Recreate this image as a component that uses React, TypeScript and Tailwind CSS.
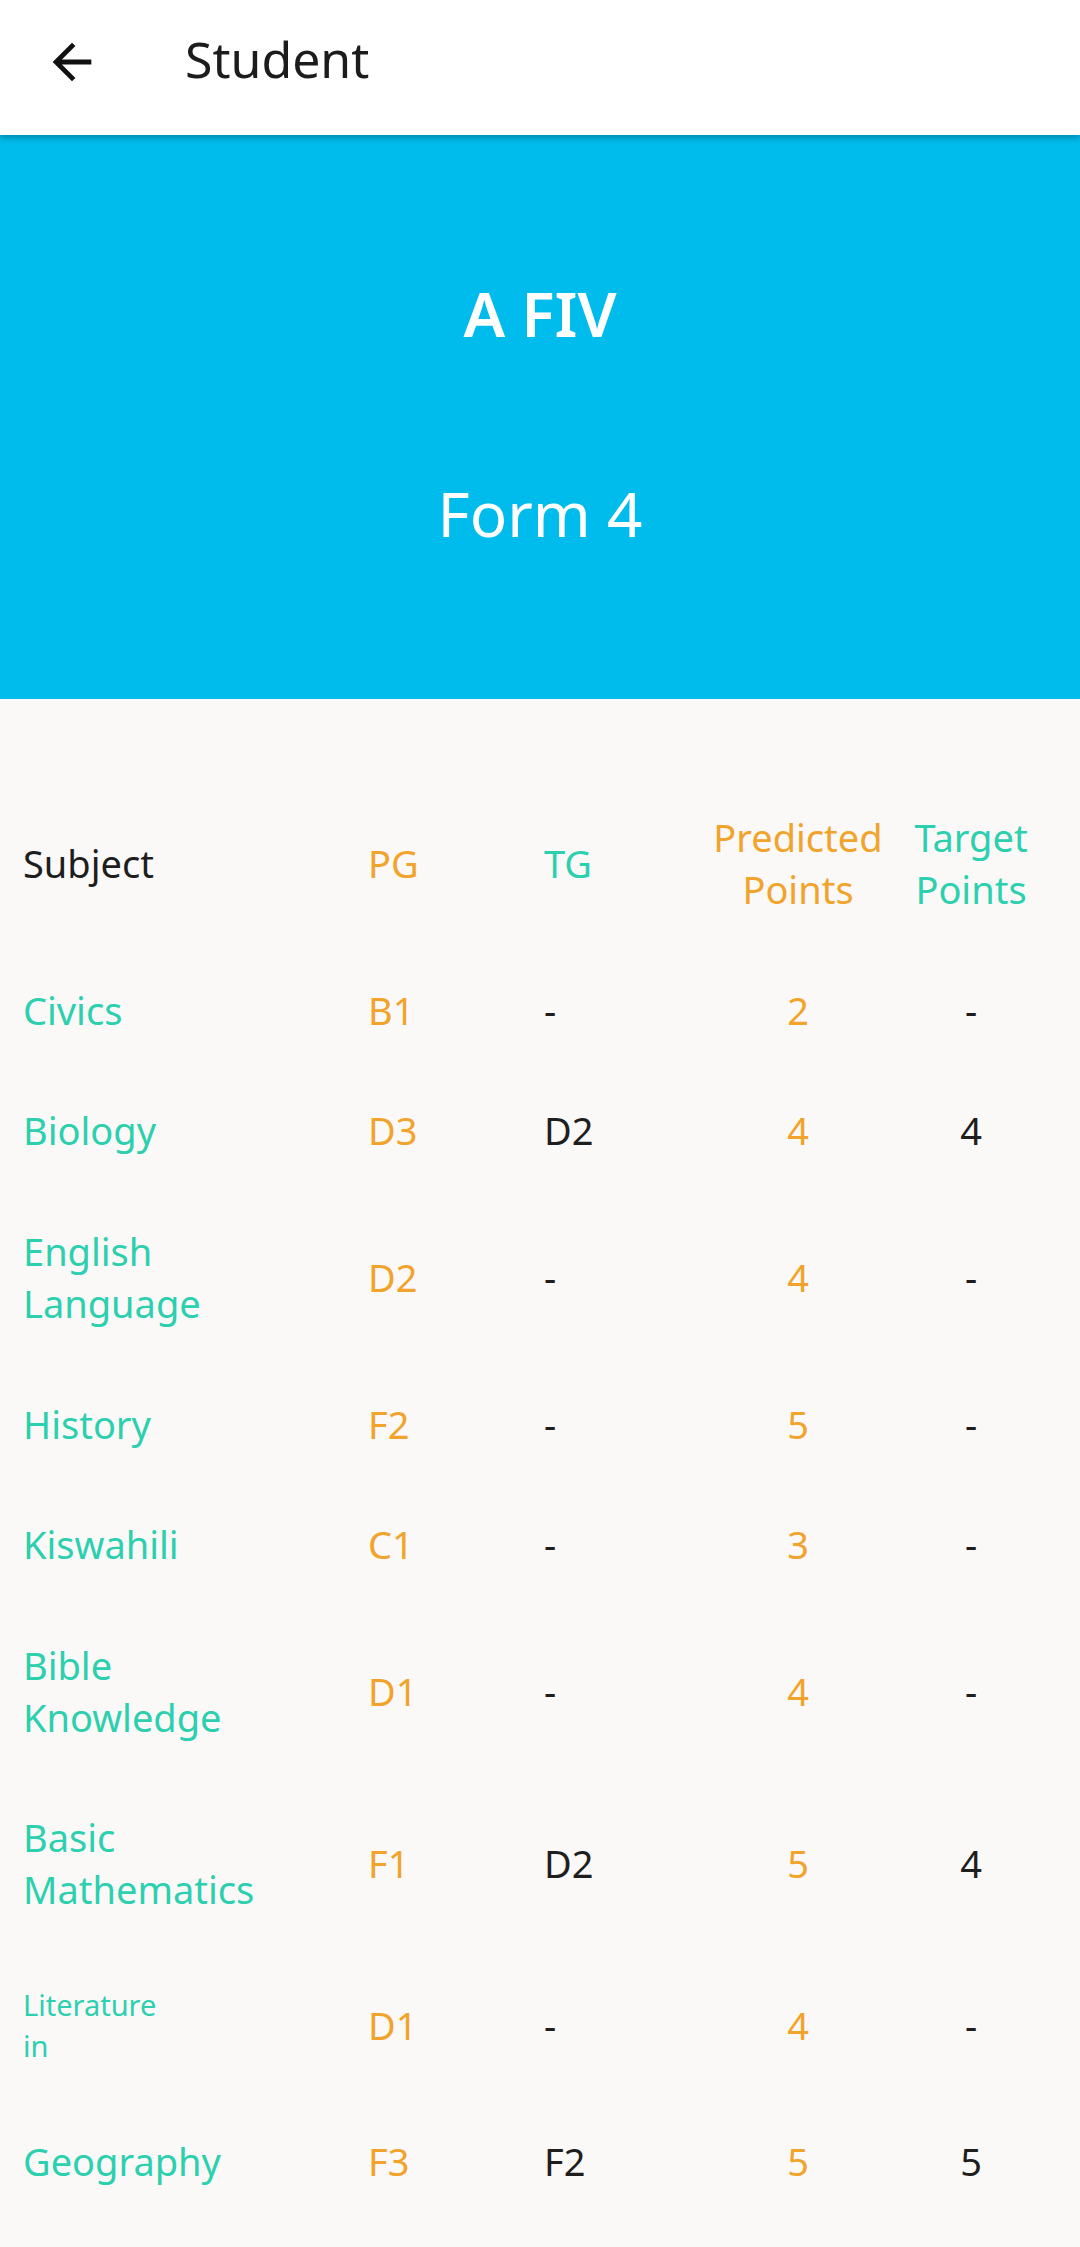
import React from "react";

type Row = {
    subject: string[];
    pg: string;
    tg: string;
    pp: string;
    tp: string;
    small?: boolean;
};

const rows: Row[] = [
    { subject: ["Civics"], pg: "B1", tg: "-", pp: "2", tp: "-" },
    { subject: ["Biology"], pg: "D3", tg: "D2", pp: "4", tp: "4" },
    { subject: ["English", "Language"], pg: "D2", tg: "-", pp: "4", tp: "-" },
    { subject: ["History"], pg: "F2", tg: "-", pp: "5", tp: "-" },
    { subject: ["Kiswahili"], pg: "C1", tg: "-", pp: "3", tp: "-" },
    { subject: ["Bible", "Knowledge"], pg: "D1", tg: "-", pp: "4", tp: "-" },
    { subject: ["Basic", "Mathematics"], pg: "F1", tg: "D2", pp: "5", tp: "4" },
    { subject: ["Literature", "in"], pg: "D1", tg: "-", pp: "4", tp: "-", small: true },
    { subject: ["Geography"], pg: "F3", tg: "F2", pp: "5", tp: "5" },
];

const grid = "grid grid-cols-[345px_176px_162px_184px_162px] items-center px-[23px] py-[34.3px]";

function BackArrow() {
    return (
        <svg width="58" height="58" viewBox="0 0 24 24" fill="#111111">
            <path d="M20 11H7.83l5.59-5.59L12 4l-8 8 8 8 1.41-1.41L7.83 13H20v-2z" />
        </svg>
    );
}

export default function App() {
    return (
        <div className="min-h-screen w-[1080px] bg-[#faf9f8] font-['Noto_Sans',sans-serif]">
            <header className="relative z-10 flex h-[135px] items-start bg-white shadow-[0_3px_6px_rgba(0,0,0,0.28)]">
                <div className="ml-[43px] mt-[33px]">
                    <BackArrow />
                </div>
                <h1 className="ml-[84px] mt-[34px] text-[50px] leading-[50px] text-[#1c1c1c]">Student</h1>
            </header>

            <section className="flex h-[564px] flex-col items-center bg-[#00bcec] pt-[147px] text-white">
                <p className="text-[62px] font-semibold leading-[62px]">A FIV</p>
                <p className="mt-[138px] text-[62px] leading-[62px]">Form 4</p>
            </section>

            <div className="pt-[78px] text-[38px] leading-[52px]">
                <div className={grid}>
                    <div className="text-[#1e1e1e]">Subject</div>
                    <div className="text-[#f2a32b]">PG</div>
                    <div className="text-[#2ccfae]">TG</div>
                    <div className="text-center text-[#f2a32b]">
                        Predicted
                        <br />
                        Points
                    </div>
                    <div className="text-center text-[#2ccfae]">
                        Target
                        <br />
                        Points
                    </div>
                </div>

                {rows.map((r) => (
                    <div key={r.subject.join(" ")} className={grid}>
                        <div
                            className={`whitespace-nowrap text-[#2ccfae] ${
                                r.small ? "text-[29px] leading-[41px]" : ""
                            }`}
                        >
                            {r.subject.map((s) => (
                                <div key={s}>{s}</div>
                            ))}
                        </div>
                        <div className="text-[#f2a32b]">{r.pg}</div>
                        <div className="text-[#1e1e1e]">{r.tg}</div>
                        <div className="text-center text-[#f2a32b]">{r.pp}</div>
                        <div className="text-center text-[#1e1e1e]">{r.tp}</div>
                    </div>
                ))}
            </div>
        </div>
    );
}
